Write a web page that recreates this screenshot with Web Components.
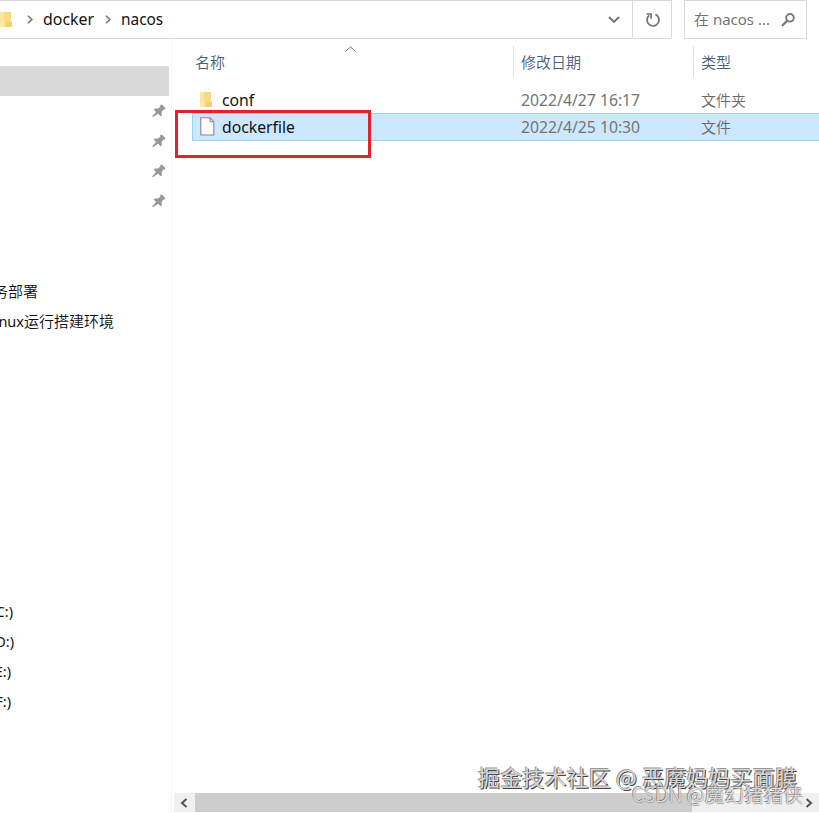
<!DOCTYPE html>
<html lang="zh-CN">
<head>
<meta charset="utf-8">
<title>nacos</title>
<style>
html,body{margin:0;width:819px;height:813px;overflow:hidden;background:#fff}
</style>
</head>
<body>
<file-explorer></file-explorer>
<script>
const define = (name, css, html) => customElements.define(name, class extends HTMLElement {
  connectedCallback() {
    if (this.shadowRoot) return;
    const root = this.attachShadow({mode: 'open'});
    root.innerHTML = `<style>*{box-sizing:border-box}svg{display:block;flex:none}${css}</style>` +
      (typeof html === 'function' ? html(this) : html);
  }
});

define('folder-icon', ':host{display:block;width:13px;height:17px}', `
<svg width="13" height="17" viewBox="0 0 13 17"><path d="M0 1h9v15H0z" fill="#fce6a0"/><path d="M3.500 1H11v10h1v5H5.500l-1-3z" fill="#f7da84"/><path d="M7 11h5v5H5.500z" fill="#f2cf6c"/></svg>`);

define('file-icon', ':host{display:block;width:15px;height:19px}', `
<svg width="15" height="19" viewBox="0 0 15 19"><path d="M.8.8h9.400l3.600 3.800v13.400H.8z" fill="#fafafa" stroke="#8a8a8a" stroke-width="1.100"/><path d="M10 1v3.800h3.600" fill="none" stroke="#8a8a8a"/></svg>`);

define('pin-icon', ':host{display:block;width:14px;height:14px}', `
<svg width="14" height="14" viewBox="0 0 14 14"><path d="M8.300.8 10 .7l3.300 3.400-.2 1.400-1.500.1-2 2.300.3 3.400-1.300.9-2.500-2.500L1.300 13H.4v-.9L4 8 1.800 5.700l.9-1.300 3.400.2L8.300 2.500z" fill="#96999c"/></svg>`);

define('address-bar', `
:host{display:flex;height:39px;font:15.4px/37px "Noto Sans","Noto Sans CJK SC",sans-serif;color:#111}
.path{width:633px;border:1px solid #d9d9d9;border-left:0;display:flex;align-items:center}
folder-icon{margin-right:14px}
.sep{margin-right:10px}.sep2{margin:0 10px 0 11px}
.drop{margin-left:auto;margin-right:12px}
.refresh{width:39px;border:1px solid #d9d9d9;border-left:0;display:grid;place-items:center;padding-left:1px}
.search{width:123px;margin-left:12px;border:1px solid #d9d9d9;display:flex;align-items:center;padding-left:9px;color:#757575;font-size:15px;white-space:nowrap}
.search svg{margin-left:auto;margin-right:10px}
span{white-space:nowrap}
.wide{width:51px;font-size:15.900px}
`, `
<div class="path"><folder-icon></folder-icon>
<svg class="sep" width="6" height="9" viewBox="0 0 6 9"><path d="M1 .7 4.800 4.500 1 8.300" fill="none" stroke="#777" stroke-width="1.600"/></svg>
<span class="wide">docker</span>
<svg class="sep2" width="6" height="9" viewBox="0 0 6 9"><path d="M1 .7 4.800 4.500 1 8.300" fill="none" stroke="#777" stroke-width="1.600"/></svg>
<span>nacos</span>
<svg class="drop" width="12" height="8" viewBox="0 0 12 8"><path d="M1 1l5 5 5-5" fill="none" stroke="#707070" stroke-width="1.900"/></svg></div>
<div class="refresh"><svg width="16" height="16" viewBox="0 0 16 16"><path d="M10.400 2.400A6 6 0 1 1 4.200 3.300" fill="none" stroke="#777" stroke-width="1.800"/><path d="M1.500 2h4.600v4.700" fill="none" stroke="#777" stroke-width="1.700"/></svg></div>
<div class="search"><span>在 nacos ...</span><svg width="16" height="16" viewBox="0 0 16 16"><circle cx="10" cy="5.800" r="3.800" fill="none" stroke="#777" stroke-width="1.900"/><path d="M7.300 8.400 2 14" stroke="#777" stroke-width="2.200"/></svg></div>`);

define('nav-row', `
:host{display:flex;height:30px;width:169px;align-items:center;font:14.500px/30px "Noto Sans","Noto Sans CJK SC",sans-serif;color:#111}
:host([selected]){background:#d9d9d9}
.label{display:flex;justify-content:flex-end;overflow:hidden;white-space:nowrap;height:30px}
.label span{flex:none}
pin-icon{margin-left:auto;margin-right:3px}
`, el => {
  const w = el.getAttribute('end');
  return (w ? `<div class="label" style="width:${w}px"><span><slot></slot></span></div>` : '') +
    (el.hasAttribute('pinned') ? '<pin-icon></pin-icon>' : '');
});

define('nav-pane', `
:host{display:block;width:172px;padding-top:27px;border-right:1px solid #f7f7f7;overflow:hidden}
.gap2{height:60px}.gap9{height:260px}
b{font-weight:350;font-size:15px;font-family:"Noto Sans CJK SC",sans-serif}
`, `
<nav-row selected></nav-row>
<nav-row pinned></nav-row><nav-row pinned></nav-row><nav-row pinned></nav-row><nav-row pinned></nav-row>
<div class="gap2"></div>
<nav-row end="38"><b>务部署</b></nav-row>
<nav-row end="114">nux<b>运行搭建环境</b></nav-row>
<div class="gap9"></div>
<nav-row end="13">C:)</nav-row><nav-row end="14">D:)</nav-row><nav-row end="11">E:)</nav-row><nav-row end="11">F:)</nav-row>`);

define('column-header', `
:host{display:grid;grid-template-columns:321px 180px 1fr;height:32px;font:350 15px/32px "Noto Sans CJK SC",sans-serif;color:#4c5f7a;position:relative}
div+div{border-left:1px solid #e2e2e2;padding-left:7px}
div:first-of-type{padding-left:3px}
svg{position:absolute;left:153px;top:0}
`, `<div>名称</div><div>修改日期</div><div>类型</div>
<svg width="11" height="6" viewBox="0 0 11 6"><path d="M.7 5.300 5.500.8l4.800 4.500" fill="none" stroke="#777"/></svg>`);

define('file-row', `
:host{display:grid;grid-template-columns:30px 299px 180px 1fr;height:28px;align-items:center;font:15.750px/26px "Noto Sans","Noto Sans CJK SC",sans-serif;color:#757575;border:1px solid transparent;border-right:0;box-sizing:border-box;white-space:nowrap}
:host([selected]){background:#cce8ff;border-color:#99d1ff}
:host(:not([selected])){position:relative;top:1px}
:host(:not([selected])) .icon,:host([selected]) .icon{padding-bottom:2px}
.icon{padding-left:7px}
.name{color:#111;margin-left:-1px}
.date{margin-left:-1px}
.type{font:350 15px/26px "Noto Sans CJK SC",sans-serif;color:#6b6b6b;margin-left:-1px}
`, el => `<div class="icon"><slot name="icon"></slot></div><div class="name"><slot></slot></div><div class="date">${el.getAttribute('date')}</div><div class="type">${el.getAttribute('type')}</div>`);

define('scroll-bar', `
:host{display:grid;grid-template-columns:21px 497px 1fr;height:19px;background:#f0f0f0}
div{display:flex;align-items:center}
.thumb{background:#cdcdcd}.l{padding-left:6px}.r{justify-content:flex-end;padding-right:6px}
`, `<div class="l"><svg width="8" height="10" viewBox="0 0 8 10"><path d="M6.500 1 2 5l4.500 4" fill="none" stroke="#555" stroke-width="2"/></svg></div><div class="thumb"></div>
<div class="r"><svg width="8" height="10" viewBox="0 0 8 10"><path d="M1.500 1 6 5 1.500 9" fill="none" stroke="#555" stroke-width="2"/></svg></div>`);

define('file-list', `
:host{display:flex;flex-direction:column;padding:7px 0 1px 2px;min-width:0}
column-header,.rows{margin-left:18px}
.rows{margin-top:7px;flex:1}
`, `<column-header></column-header>
<div class="rows">
<file-row date="2022/4/27 16:17" type="文件夹"><folder-icon slot="icon"></folder-icon>conf</file-row>
<file-row selected date="2022/4/25 10:30" type="文件"><file-icon slot="icon"></file-icon>dockerfile</file-row>
</div><scroll-bar></scroll-bar>`);

define('water-mark', `
:host{position:absolute;white-space:nowrap;font-family:"Noto Sans CJK SC",sans-serif}
:host([kind=main]){left:478px;top:760px;font-size:22px;letter-spacing:.15px;line-height:32px;color:#d6d6d6;text-shadow:1px 1px .5px #444,-1px -1px .5px #999}
:host([kind=sub]){left:632px;top:780px;font-size:19.700px;font-weight:300;line-height:28px;color:#ddd;text-shadow:-1px -1px 0 #888,.5px .5px 1px #999}
`, '<slot></slot>');

define('file-explorer', `
:host{display:grid;grid-template:39px 1fr / 172px 1fr;width:819px;height:813px;background:#fff;position:relative;overflow:hidden}
address-bar{grid-column:1/-1}
.mark{position:absolute;left:175px;top:110px;width:196px;height:48px;border:3px solid #dc252d}
`, `<address-bar></address-bar><nav-pane></nav-pane><file-list></file-list>
<div class="mark"></div>
<water-mark kind="main">掘金技术社区 @ 恶魔妈妈买面膜</water-mark>
<water-mark kind="sub">CSDN @魔幻猪猪侠</water-mark>`);
</script>
</body>
</html>
